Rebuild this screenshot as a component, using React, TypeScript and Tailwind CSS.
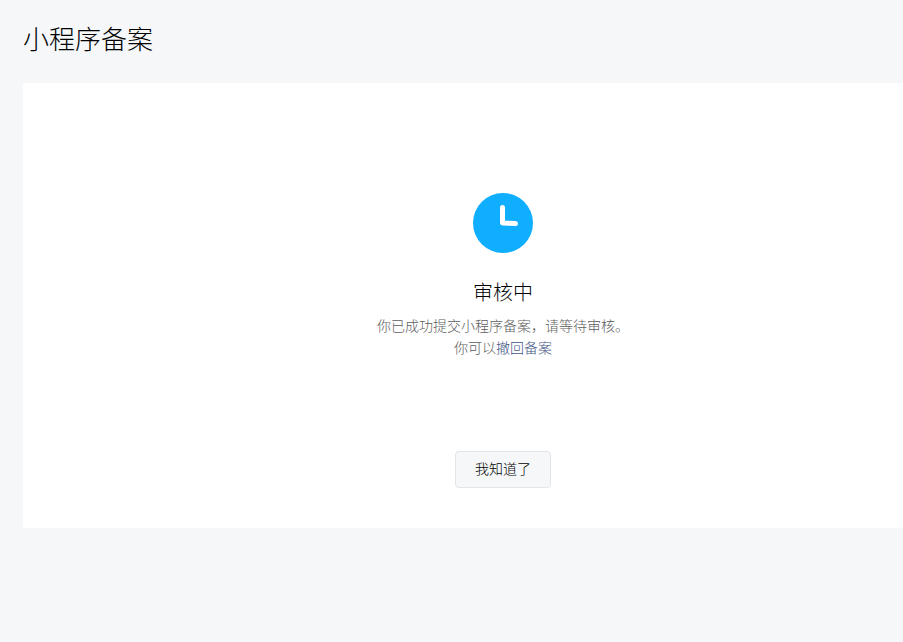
export default function App() {
  const cjk = { fontFamily: '"Noto Sans CJK SC", sans-serif' };
  return (
    <div className="h-[642px] w-[903px] overflow-hidden bg-[#f6f7f9] pl-[23px]" style={cjk}>
      <h1 className="h-[83px] pt-[20px] text-[26px] leading-[36px] font-light text-[#000000]">小程序备案</h1>
      <div className="flex h-[445px] w-[960px] flex-col items-center bg-white pt-[110px]">
        <svg width="60" height="60" viewBox="0 0 60 60">
          <circle cx="30" cy="30" r="30" fill="#10aeff" />
          <path d="M29.5 14.5 L29.5 30 L42.5 30.6" fill="none" stroke="#fff" strokeWidth="5" strokeLinecap="round" strokeLinejoin="round" />
        </svg>
        <div className="mt-[25px] text-[20px] leading-[28px] font-light text-[#000000]">审核中</div>
        <div className="mt-[8px] text-[14px] leading-[22px] font-light text-[#5c5c5c]">你已成功提交小程序备案，请等待审核。</div>
        <div className="text-[14px] leading-[22px] font-light text-[#5c5c5c]">
          你可以<span className="text-[#3f5584]">撤回备案</span>
        </div>
        <button className="mt-[93px] flex h-[37px] w-[96px] items-center justify-center rounded-[4px] border border-[#e2e4e8] bg-[#f6f7f9] pb-[2px] text-[14px] font-light text-[#000000]">
          我知道了
        </button>
      </div>
    </div>
  );
}
